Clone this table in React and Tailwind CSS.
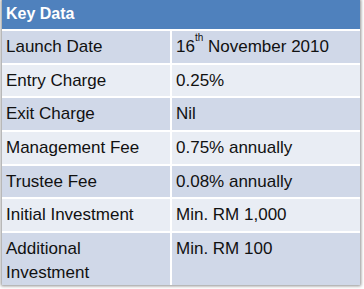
import React from 'react';

const rows = [
    { label: 'Launch Date', value: <>16<sup className='text-[10px] align-[6px]'>th</sup> November 2010</> },
    { label: 'Entry Charge', value: '0.25%' },
    { label: 'Exit Charge', value: 'Nil' },
    { label: 'Management Fee', value: '0.75% annually' },
    { label: 'Trustee Fee', value: '0.08% annually' },
    { label: 'Initial Investment', value: 'Min. RM 1,000' },
    { label: <>Additional<br />Investment</>, value: 'Min. RM 100', tall: true },
];

const App = () => {
    return (
        <div className='w-[364px] h-[289px] bg-white overflow-hidden' style={{ fontFamily: '"Liberation Sans", Arial, sans-serif' }}>
            <div className='ml-[2px] w-[358px] h-[285px] shadow-[0_0_3px_1px_rgba(0,0,0,0.45)] flex flex-col'>
                {/* Header */}
                <div className='h-[32px] bg-[#4f81bd] border-b-2 border-white px-[4px] pt-[4px] text-white font-bold text-[16px] leading-[20px]'>
                    Key Data
                </div>

                {rows.map((row, i) => (
                    <div
                        key={i}
                        className={`flex text-[17px] text-[#111] border-b-2 border-white last:border-b-0 ${i % 2 === 0 ? 'bg-[#d0d8e8]' : 'bg-[#e9edf4]'} ${row.tall ? 'flex-1' : 'h-[35px]'}`}
                    >
                        <div className='w-[170px] border-r-2 border-white pl-[4px] pt-[4px] leading-[24px]'>
                            {row.label}
                        </div>
                        <div className='flex-1 pl-[4px] pt-[4px] leading-[24px] whitespace-nowrap'>
                            {row.value}
                        </div>
                    </div>
                ))}
            </div>
        </div>
    );
};

export default App;
